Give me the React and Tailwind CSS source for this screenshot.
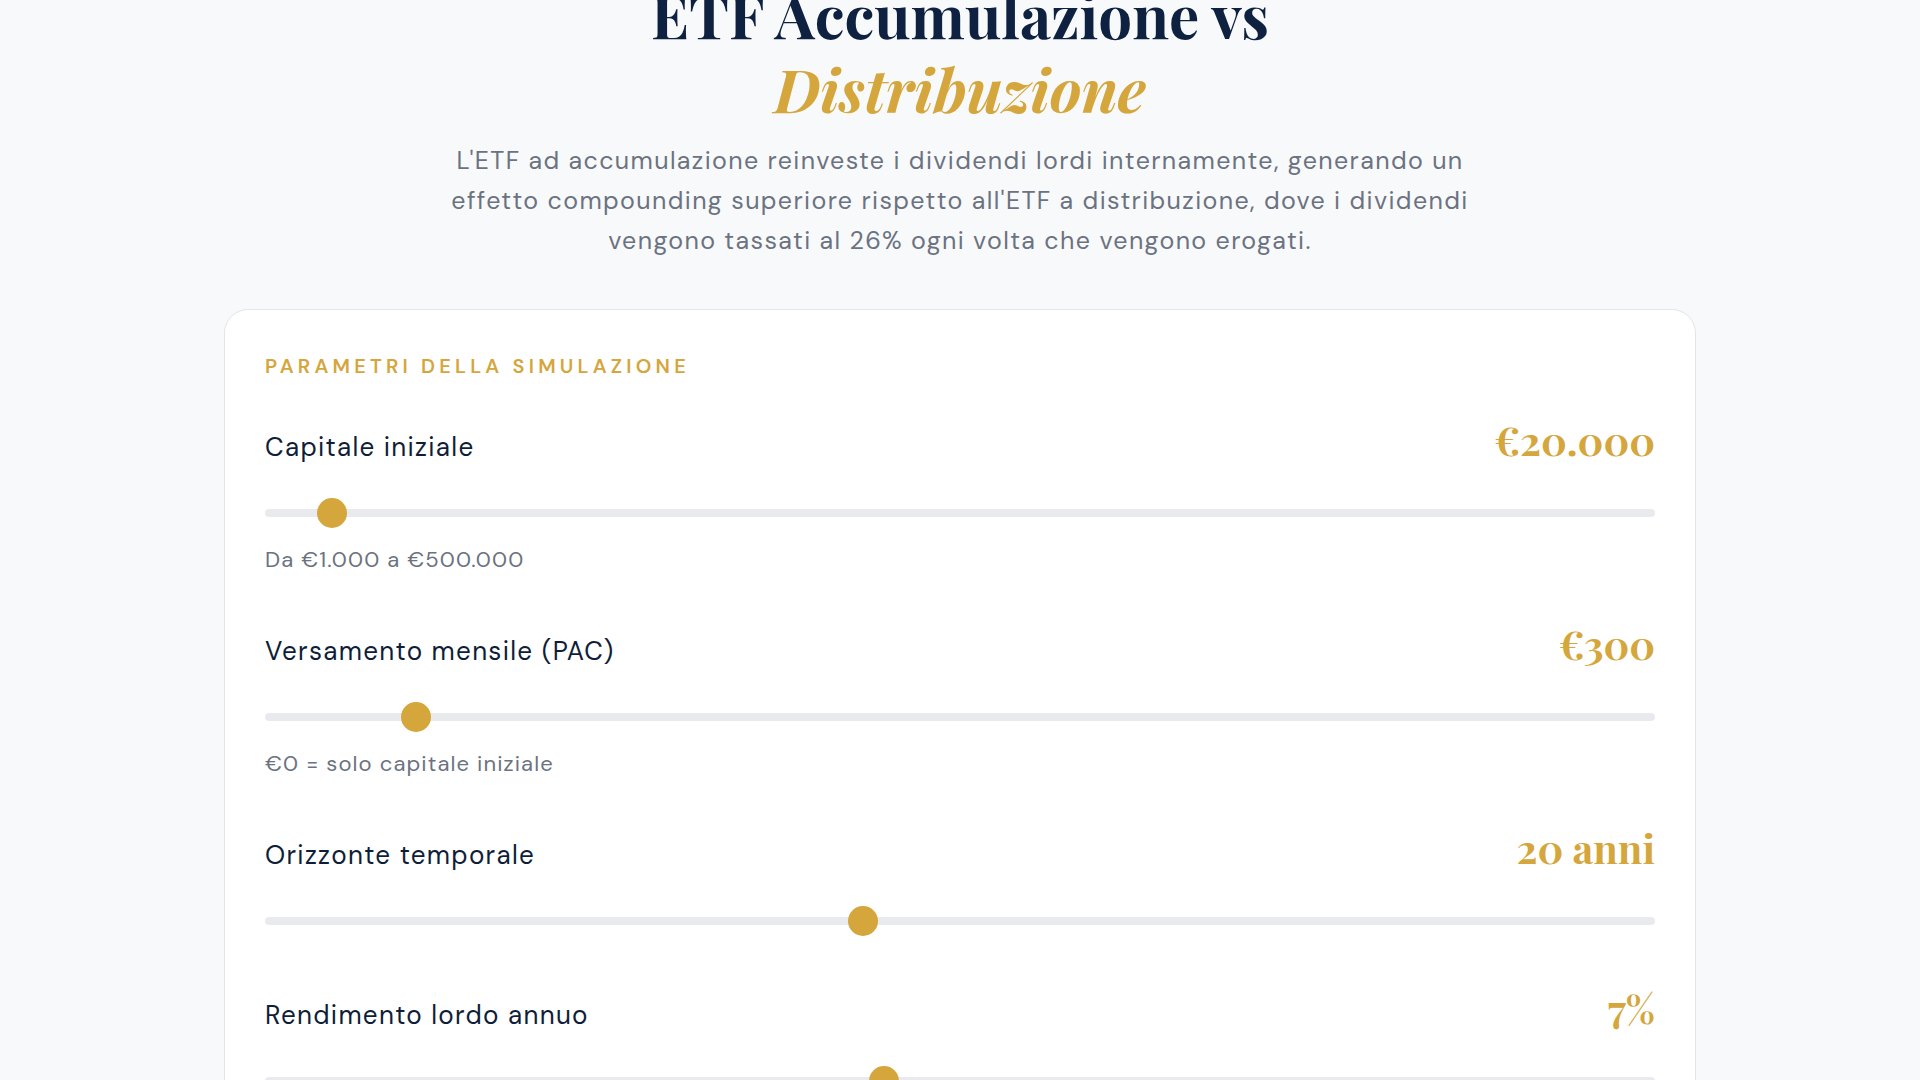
import { useState } from "react";

const sliders = [
  {
    key: "capital",
    label: "Capitale iniziale",
    min: 1000,
    max: 500000,
    step: 1000,
    initial: 20000,
    format: (v) => `€${formatNumber(v)}`,
    hint: "Da €1.000 a €500.000",
  },
  {
    key: "monthly",
    label: "Versamento mensile (PAC)",
    min: 0,
    max: 3000,
    step: 50,
    initial: 300,
    format: (v) => `€${formatNumber(v)}`,
    hint: "€0 = solo capitale iniziale",
  },
  {
    key: "years",
    label: "Orizzonte temporale",
    min: 5,
    max: 40,
    step: 1,
    initial: 20,
    format: (v) => `${v} anni`,
  },
  {
    key: "return",
    label: "Rendimento lordo annuo",
    min: 3,
    max: 12,
    step: 0.5,
    initial: 7,
    format: (v) => `${String(v).replace(".", ",")}%`,
  },
];

function formatNumber(n) {
  return String(Math.round(n)).replace(/\B(?=(\d{3})+(?!\d))/g, ".");
}

const sans = "font-['DM_Sans','Inter','Noto_Sans',sans-serif]";
const serif = "font-['Playfair_Display','Liberation_Serif','DejaVu_Serif',serif]";

const SliderField = ({ field, value, onChange }) => (
  <div className={`flex flex-col ${field.hint ? "" : "pb-1"}`}>
    <div className="flex items-baseline justify-between">
      <span className="text-[26px] leading-9 tracking-[0.05em] text-[#0f1e38]">{field.label}</span>
      <span className={`${serif} text-[40px] leading-[48px] font-bold text-[#d4a63c]`}>
        {field.format(value)}
      </span>
    </div>

    <div className="mt-[33px] flex h-[30px] items-center">
      <input
        type="range"
        min={field.min}
        max={field.max}
        step={field.step}
        value={value}
        onChange={(e) => onChange(Number(e.target.value))}
        className="h-2 w-full cursor-pointer appearance-none rounded-full bg-[#e9eaee] outline-none [&::-webkit-slider-thumb]:h-[30px] [&::-webkit-slider-thumb]:w-[30px] [&::-webkit-slider-thumb]:appearance-none [&::-webkit-slider-thumb]:rounded-full [&::-webkit-slider-thumb]:border-0 [&::-webkit-slider-thumb]:bg-[#d4a63c] [&::-moz-range-thumb]:h-[30px] [&::-moz-range-thumb]:w-[30px] [&::-moz-range-thumb]:rounded-full [&::-moz-range-thumb]:border-0 [&::-moz-range-thumb]:bg-[#d4a63c]"
      />
    </div>

    {field.hint && (
      <p className="mt-4 text-[22px] leading-8 tracking-[0.05em] text-[#6b7280]">{field.hint}</p>
    )}
  </div>
);

export default function App() {
  const [values, setValues] = useState(
    Object.fromEntries(sliders.map((s) => [s.key, s.initial]))
  );

  return (
    <div className={`${sans} min-h-screen bg-[#f8f9fb] pb-24`}>
      <div className="mx-auto flex max-w-[1536px] flex-col px-8">
        <header className="-mt-[23px] flex flex-col items-center text-center">
          <h1 className={`${serif} text-[60px] leading-[74px] font-bold text-[#0e2140]`}>
            ETF Accumulazione vs
            <br />
            <em className="text-[#d4a63c]">Distribuzione</em>
          </h1>
          <p className="mt-[16px] max-w-[1040px] text-[25px] leading-10 tracking-[0.055em] text-[#6b7280]">
            L'ETF ad accumulazione reinveste i dividendi lordi internamente, generando un
            effetto compounding superiore rispetto all'ETF a distribuzione, dove i dividendi
            vengono tassati al 26% ogni volta che vengono erogati.
          </p>
        </header>

        <section className="mt-12 rounded-3xl border border-[#e3e5e9] bg-white p-10">
          <h2 className="text-[20px] leading-8 font-semibold tracking-[0.21em] text-[#d4a63c] uppercase">
            Parametri della simulazione
          </h2>

          <div className="mt-[34px] flex flex-col gap-11">
            {sliders.map((field) => (
              <SliderField
                key={field.key}
                field={field}
                value={values[field.key]}
                onChange={(v) => setValues((prev) => ({ ...prev, [field.key]: v }))}
              />
            ))}
          </div>
        </section>
      </div>
    </div>
  );
}
